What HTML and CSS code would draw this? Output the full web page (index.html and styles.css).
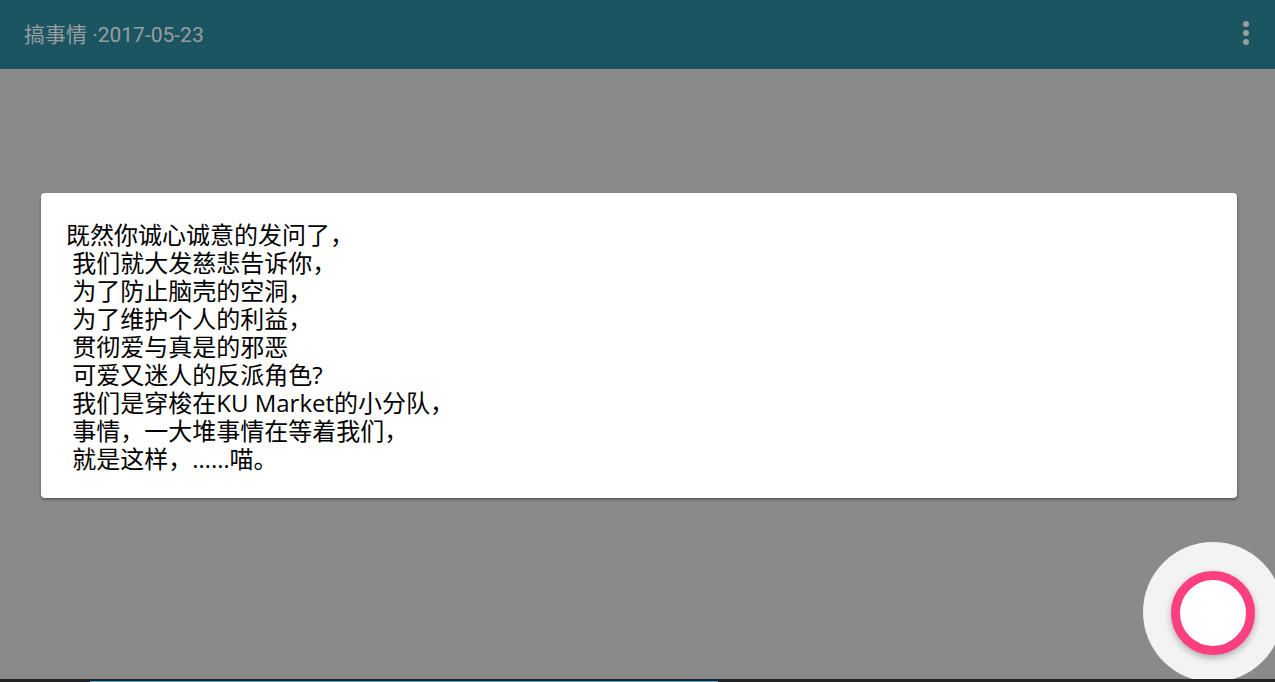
FILE: index.html
```html
<!DOCTYPE html>
<html lang="zh-CN">
<head>
<meta charset="utf-8">
<title>搞事情</title>
<link rel="stylesheet" href="styles.css">
</head>
<body>
<div class="screen">
  <header class="appbar">
    <div class="title">搞事情 ·2017-05-23</div>
    <svg class="menu" width="6" height="24" viewBox="0 0 6 24" aria-hidden="true">
      <circle cx="3" cy="3" r="3"/>
      <circle cx="3" cy="12" r="3"/>
      <circle cx="3" cy="21" r="3"/>
    </svg>
  </header>
  <main class="content">
    <div class="card">
      <div class="poem">
        <div class="line">既然你诚心诚意的发问了，</div>
        <div class="line"> 我们就大发慈悲告诉你，</div>
        <div class="line"> 为了防止脑壳的空洞，</div>
        <div class="line"> 为了维护个人的利益，</div>
        <div class="line"> 贯彻爱与真是的邪恶</div>
        <div class="line"> 可爱又迷人的反派角色?</div>
        <div class="line"> 我们是穿梭在KU Market的小分队，</div>
        <div class="line"> 事情，一大堆事情在等着我们，</div>
        <div class="line"> 就是这样，……喵。</div>
      </div>
    </div>
  </main>
  <div class="fab-halo">
    <div class="fab"></div>
  </div>
  <div class="navstrip"><span class="navstrip-blue"></span></div>
</div>
</body>
</html>
```

FILE: styles.css
```css
html, body {
  margin: 0;
  padding: 0;
  background: #8a8a8a;
}

.screen {
  position: relative;
  width: 1275px;
  height: 682px;
  overflow: hidden;
  display: flex;
  flex-direction: column;
  background: #8a8a8a;
}

.appbar {
  height: 69px;
  flex: 0 0 69px;
  box-sizing: border-box;
  background: #1b5561;
  display: flex;
  align-items: center;
  justify-content: space-between;
  padding: 0 26px 3px 24px;
}

.title {
  font-family: Roboto, "Noto Sans CJK SC", sans-serif;
  font-size: 21px;
  color: #979ea0;
}

.menu {
  fill: #9a9e9f;
  display: block;
}

.content {
  flex: 1 1 auto;
  padding: 124px 38px 0 41px;
}

.card {
  background: #ffffff;
  border-radius: 4px;
  box-shadow: 0 2px 3px rgba(0, 0, 0, 0.28), 1px 1px 2px rgba(0, 0, 0, 0.12);
  height: 305px;
  box-sizing: border-box;
  padding: 28px 25px 0 25px;
}

.poem {
  font-family: "Open Sans", "Noto Sans CJK SC", sans-serif;
  font-size: 24px;
  line-height: 28px;
  color: #000000;
}

.line {
  white-space: pre;
}

.fab-halo {
  position: absolute;
  left: 1143px;
  top: 542px;
  width: 140px;
  height: 140px;
  border-radius: 50%;
  background: #f3f3f3;
  display: flex;
  align-items: center;
  justify-content: center;
}

.fab {
  width: 84px;
  height: 84px;
  box-sizing: border-box;
  border-radius: 50%;
  border: 9px solid #fe3f7f;
  background: #ffffff;
  box-shadow: 0 3px 7px rgba(0, 0, 0, 0.3);
  margin-top: 2px;
}

.navstrip {
  position: absolute;
  left: 0;
  right: 0;
  bottom: 0;
  height: 3px;
  background: #202225;
  z-index: 2;
}

.navstrip-blue {
  position: absolute;
  left: 90px;
  width: 628px;
  bottom: 0;
  height: 1px;
  background: #4aa8d8;
}
```
